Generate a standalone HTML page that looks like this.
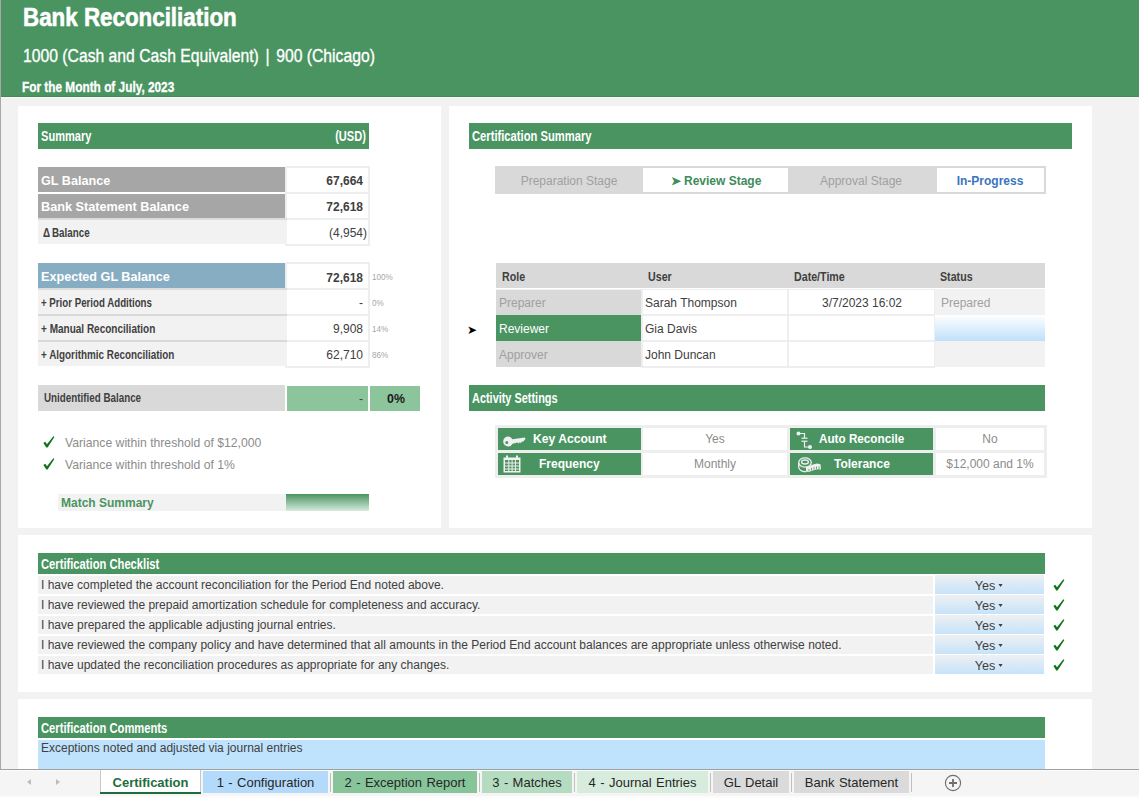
<!DOCTYPE html>
<html><head><meta charset="utf-8"><style>
html,body{margin:0;padding:0}
body{width:1139px;height:798px;overflow:hidden;position:relative;background:#f2f2f2;font-family:"Liberation Sans",sans-serif}
body>div{position:absolute}
.t{white-space:nowrap;line-height:normal}
svg{display:block}
</style></head><body>
<div style="left:0px;top:0px;width:1px;height:770px;background:#a8a8a8;"></div>
<div style="left:1px;top:0px;width:1138px;height:96px;background:#4a9462;"></div>
<div style="left:1px;top:96px;width:1138px;height:1px;background:#438c5a;"></div>
<div style="left:1px;top:97px;width:1138px;height:1px;background:#f9f5f8;"></div>
<div class="t" style="top:2.47px;font-size:26px;font-weight:700;color:#fff;transform:scaleX(0.86);left:23px;transform-origin:0 0;-webkit-text-stroke:0.6px #fff;">Bank Reconciliation</div>
<div class="t" style="top:44.80px;font-size:19px;font-weight:400;color:#fff;transform:scaleX(0.827);left:23px;transform-origin:0 0;-webkit-text-stroke:0.35px #fff;">1000 (Cash and Cash Equivalent)<span style="display:inline-block;width:8px"></span>|<span style="display:inline-block;width:8px"></span>900 (Chicago)</div>
<div class="t" style="top:79.33px;font-size:14px;font-weight:700;color:#fff;transform:scaleX(0.845);left:22px;transform-origin:0 0;-webkit-text-stroke:0.3px #fff;">For the Month of July, 2023</div>
<div style="left:18px;top:106px;width:423px;height:422px;background:#fff;"></div>
<div style="left:449px;top:106px;width:643px;height:422px;background:#fff;"></div>
<div style="left:18px;top:535px;width:1074px;height:157px;background:#fff;"></div>
<div style="left:18px;top:699px;width:1074px;height:71px;background:#fff;"></div>
<div style="left:38px;top:123px;width:331px;height:26px;background:#4a9462;"></div>
<div class="t" style="top:128.33px;font-size:14px;font-weight:700;color:#fff;transform:scaleX(0.79);left:41px;transform-origin:0 0;">Summary</div>
<div class="t" style="top:128.33px;font-size:14px;font-weight:700;color:#fff;transform:scaleX(0.79);right:773px;transform-origin:100% 0;text-align:right;">(USD)</div>
<div style="left:285px;top:166px;width:85px;height:80px;background:#eeeeee;"></div>
<div style="left:38px;top:167px;width:247px;height:25px;background:#a6a6a6;"></div>
<div style="left:38px;top:194px;width:247px;height:24px;background:#a6a6a6;"></div>
<div style="left:38px;top:218px;width:249px;height:2px;background:#dcdcdc;"></div>
<div style="left:38px;top:220px;width:249px;height:24px;background:#f2f2f2;"></div>
<div style="left:287px;top:168px;width:81px;height:24px;background:#fff;"></div>
<div style="left:287px;top:194px;width:81px;height:24px;background:#fff;"></div>
<div style="left:287px;top:220px;width:81px;height:24px;background:#fff;"></div>
<div class="t" style="top:173.24px;font-size:13px;font-weight:700;color:#fff;transform:scaleX(0.97);left:41px;transform-origin:0 0;">GL Balance</div>
<div class="t" style="top:199.24px;font-size:13px;font-weight:700;color:#fff;transform:scaleX(0.975);left:41px;transform-origin:0 0;">Bank Statement Balance</div>
<div class="t" style="top:225.24px;font-size:13px;font-weight:700;color:#404040;transform:scaleX(0.755);left:43px;transform-origin:0 0;">&Delta;&thinsp;Balance</div>
<div class="t" style="top:174.14px;font-size:12px;font-weight:700;color:#404040;right:776px;transform-origin:100% 0;text-align:right;">67,664</div>
<div class="t" style="top:200.14px;font-size:12px;font-weight:700;color:#404040;right:776px;transform-origin:100% 0;text-align:right;">72,618</div>
<div class="t" style="top:226.14px;font-size:12px;font-weight:400;color:#404040;right:772px;transform-origin:100% 0;text-align:right;">(4,954)</div>
<div style="left:285px;top:262px;width:85px;height:106px;background:#eeeeee;"></div>
<div style="left:38px;top:263px;width:247px;height:25px;background:#87adc3;"></div>
<div style="left:38px;top:288px;width:249px;height:2px;background:#dcdcdc;"></div>
<div style="left:38px;top:290px;width:249px;height:24px;background:#f2f2f2;"></div>
<div style="left:38px;top:314px;width:249px;height:2px;background:#d9d9d9;"></div>
<div style="left:38px;top:316px;width:249px;height:24px;background:#f2f2f2;"></div>
<div style="left:38px;top:340px;width:249px;height:2px;background:#d9d9d9;"></div>
<div style="left:38px;top:342px;width:249px;height:24px;background:#f2f2f2;"></div>
<div style="left:287px;top:264px;width:81px;height:24px;background:#fff;"></div>
<div style="left:287px;top:290px;width:81px;height:24px;background:#fff;"></div>
<div style="left:287px;top:316px;width:81px;height:24px;background:#fff;"></div>
<div style="left:287px;top:342px;width:81px;height:24px;background:#fff;"></div>
<div class="t" style="top:269.24px;font-size:13px;font-weight:700;color:#fff;transform:scaleX(0.97);left:41px;transform-origin:0 0;">Expected GL Balance</div>
<div class="t" style="top:295.24px;font-size:13px;font-weight:700;color:#404040;transform:scaleX(0.746);left:41px;transform-origin:0 0;">+ Prior Period Additions</div>
<div class="t" style="top:321.24px;font-size:13px;font-weight:700;color:#404040;transform:scaleX(0.77);left:41px;transform-origin:0 0;">+ Manual Reconciliation</div>
<div class="t" style="top:347.24px;font-size:13px;font-weight:700;color:#404040;transform:scaleX(0.76);left:41px;transform-origin:0 0;">+ Algorithmic Reconciliation</div>
<div class="t" style="top:271.14px;font-size:12px;font-weight:700;color:#404040;right:776px;transform-origin:100% 0;text-align:right;">72,618</div>
<div class="t" style="top:296.14px;font-size:12px;font-weight:400;color:#404040;right:776px;transform-origin:100% 0;text-align:right;">-</div>
<div class="t" style="top:322.14px;font-size:12px;font-weight:400;color:#404040;right:776px;transform-origin:100% 0;text-align:right;">9,908</div>
<div class="t" style="top:348.14px;font-size:12px;font-weight:400;color:#404040;right:776px;transform-origin:100% 0;text-align:right;">62,710</div>
<div class="t" style="top:271.86px;font-size:9px;font-weight:400;color:#a6a6a6;transform:scaleX(0.9);left:372px;transform-origin:0 0;">100%</div>
<div class="t" style="top:297.86px;font-size:9px;font-weight:400;color:#a6a6a6;transform:scaleX(0.9);left:372px;transform-origin:0 0;">0%</div>
<div class="t" style="top:323.86px;font-size:9px;font-weight:400;color:#a6a6a6;transform:scaleX(0.9);left:372px;transform-origin:0 0;">14%</div>
<div class="t" style="top:349.86px;font-size:9px;font-weight:400;color:#a6a6a6;transform:scaleX(0.9);left:372px;transform-origin:0 0;">86%</div>
<div style="left:38px;top:385px;width:247px;height:26px;background:#d9d9d9;"></div>
<div style="left:287px;top:386px;width:81px;height:25px;background:#8cc59b;"></div>
<div style="left:370px;top:386px;width:50px;height:25px;background:#8cc59b;"></div>
<div class="t" style="top:390.24px;font-size:13px;font-weight:700;color:#404040;transform:scaleX(0.755);left:44px;transform-origin:0 0;">Unidentified Balance</div>
<div class="t" style="top:392.14px;font-size:12px;font-weight:400;color:#404040;right:776px;transform-origin:100% 0;text-align:right;">-</div>
<div class="t" style="top:391.24px;font-size:13px;font-weight:700;color:#1a1a1a;transform:scaleX(0.95);left:96px;width:600px;text-align:center;transform-origin:50% 0;">0%</div>
<div style="left:43px;top:436px;width:12px;height:12px"><svg width="12" height="12" viewBox="0 0 12 12"><path d="M0.4 6.9 L2.2 5.7 L4 8.3 L10.4 0.3 L11.4 1 L4.6 11.4 L3.3 11.4 Z" fill="#0e7418"/></svg></div>
<div class="t" style="top:435.96px;font-size:12.2px;font-weight:400;color:#8c8c8c;left:65px;transform-origin:0 0;">Variance within threshold of $12,000</div>
<div style="left:43px;top:458px;width:12px;height:12px"><svg width="12" height="12" viewBox="0 0 12 12"><path d="M0.4 6.9 L2.2 5.7 L4 8.3 L10.4 0.3 L11.4 1 L4.6 11.4 L3.3 11.4 Z" fill="#0e7418"/></svg></div>
<div class="t" style="top:457.96px;font-size:12.2px;font-weight:400;color:#8c8c8c;left:65px;transform-origin:0 0;">Variance within threshold of 1%</div>
<div style="left:58px;top:494px;width:228px;height:17px;background:#f2f2f2;"></div>
<div style="left:286px;top:494px;width:83px;height:17px;background:linear-gradient(#4a9462,#d6ebdc);"></div>
<div class="t" style="top:496.14px;font-size:12px;font-weight:700;color:#4a9462;left:61px;transform-origin:0 0;">Match Summary</div>
<div style="left:469px;top:123px;width:603px;height:26px;background:#4a9462;"></div>
<div class="t" style="top:128.33px;font-size:14px;font-weight:700;color:#fff;transform:scaleX(0.8);left:472px;transform-origin:0 0;">Certification Summary</div>
<div style="left:495px;top:166px;width:551px;height:28px;background:#d9d9d9;"></div>
<div style="left:643px;top:168px;width:145px;height:24px;background:#fff;"></div>
<div style="left:937px;top:168px;width:107px;height:24px;background:#fff;"></div>
<div class="t" style="top:174.14px;font-size:12px;font-weight:400;color:#a0a0a0;left:269px;width:600px;text-align:center;transform-origin:50% 0;">Preparation Stage</div>
<div class="t" style="top:174.14px;font-size:12px;font-weight:700;color:#3d8c5a;left:416px;width:600px;text-align:center;transform-origin:50% 0;">&#10148; Review Stage</div>
<div class="t" style="top:174.14px;font-size:12px;font-weight:400;color:#a0a0a0;left:561px;width:600px;text-align:center;transform-origin:50% 0;">Approval Stage</div>
<div class="t" style="top:174.14px;font-size:12px;font-weight:700;color:#3a74c0;left:690px;width:600px;text-align:center;transform-origin:50% 0;">In-Progress</div>
<div style="left:496px;top:263px;width:549px;height:25px;background:#d9d9d9;"></div>
<div style="left:641px;top:289px;width:294px;height:79px;background:#eeeeee;"></div>
<div style="left:496px;top:289px;width:145px;height:26px;background:#d9d9d9;"></div>
<div style="left:496px;top:315px;width:145px;height:26px;background:#4a9462;"></div>
<div style="left:496px;top:341px;width:145px;height:26px;background:#d9d9d9;"></div>
<div style="left:496px;top:289px;width:145px;height:1px;background:#f2f2f2;"></div>
<div style="left:643px;top:290px;width:144px;height:24px;background:#fff;"></div>
<div style="left:789px;top:290px;width:145px;height:24px;background:#fff;"></div>
<div style="left:643px;top:316px;width:144px;height:24px;background:#fff;"></div>
<div style="left:789px;top:316px;width:145px;height:24px;background:#fff;"></div>
<div style="left:643px;top:342px;width:144px;height:24px;background:#fff;"></div>
<div style="left:789px;top:342px;width:145px;height:24px;background:#fff;"></div>
<div style="left:935px;top:289px;width:110px;height:26px;background:#f2f2f2;"></div>
<div style="left:935px;top:315px;width:110px;height:26px;background:linear-gradient(#ffffff,#bee0fb);"></div>
<div style="left:935px;top:341px;width:110px;height:26px;background:#f2f2f2;"></div>
<div class="t" style="top:269.24px;font-size:13px;font-weight:700;color:#404040;transform:scaleX(0.82);left:502px;transform-origin:0 0;">Role</div>
<div class="t" style="top:269.24px;font-size:13px;font-weight:700;color:#404040;transform:scaleX(0.82);left:648px;transform-origin:0 0;">User</div>
<div class="t" style="top:269.24px;font-size:13px;font-weight:700;color:#404040;transform:scaleX(0.82);left:794px;transform-origin:0 0;">Date/Time</div>
<div class="t" style="top:269.24px;font-size:13px;font-weight:700;color:#404040;transform:scaleX(0.82);left:940px;transform-origin:0 0;">Status</div>
<div class="t" style="top:296.14px;font-size:12px;font-weight:400;color:#a0a0a0;left:499px;transform-origin:0 0;">Preparer</div>
<div class="t" style="top:322.14px;font-size:12px;font-weight:400;color:#fff;left:499px;transform-origin:0 0;">Reviewer</div>
<div class="t" style="top:348.14px;font-size:12px;font-weight:400;color:#a0a0a0;left:499px;transform-origin:0 0;">Approver</div>
<div class="t" style="top:296.14px;font-size:12px;font-weight:400;color:#404040;left:645px;transform-origin:0 0;">Sarah Thompson</div>
<div class="t" style="top:322.14px;font-size:12px;font-weight:400;color:#404040;left:645px;transform-origin:0 0;">Gia Davis</div>
<div class="t" style="top:348.14px;font-size:12px;font-weight:400;color:#404040;left:645px;transform-origin:0 0;">John Duncan</div>
<div class="t" style="top:296.14px;font-size:12px;font-weight:400;color:#404040;left:562px;width:600px;text-align:center;transform-origin:50% 0;">3/7/2023 16:02</div>
<div class="t" style="top:296.14px;font-size:12px;font-weight:400;color:#a0a0a0;left:941px;transform-origin:0 0;">Prepared</div>
<div class="t" style="top:322.64px;font-size:12px;font-weight:400;color:#000;left:467px;transform-origin:0 0;">&#10148;</div>
<div style="left:469px;top:385px;width:576px;height:26px;background:#4a9462;"></div>
<div class="t" style="top:390.33px;font-size:14px;font-weight:700;color:#fff;transform:scaleX(0.78);left:472px;transform-origin:0 0;">Activity Settings</div>
<div style="left:495px;top:425px;width:552px;height:53px;background:#eeeeee;"></div>
<div style="left:498px;top:428px;width:143px;height:22px;background:#4a9462;"></div>
<div style="left:643px;top:428px;width:144px;height:22px;background:#fff;"></div>
<div style="left:790px;top:428px;width:143px;height:22px;background:#4a9462;"></div>
<div style="left:936px;top:428px;width:108px;height:22px;background:#fff;"></div>
<div style="left:498px;top:453px;width:143px;height:22px;background:#4a9462;"></div>
<div style="left:643px;top:453px;width:144px;height:22px;background:#fff;"></div>
<div style="left:790px;top:453px;width:143px;height:22px;background:#4a9462;"></div>
<div style="left:936px;top:453px;width:108px;height:22px;background:#fff;"></div>
<div class="t" style="top:432.14px;font-size:12px;font-weight:700;color:#fff;transform:scaleX(1.01);left:533px;transform-origin:0 0;">Key Account</div>
<div class="t" style="top:456.64px;font-size:12px;font-weight:700;color:#fff;left:539px;transform-origin:0 0;">Frequency</div>
<div class="t" style="top:432.14px;font-size:12px;font-weight:700;color:#fff;transform:scaleX(0.975);left:819px;transform-origin:0 0;">Auto Reconcile</div>
<div class="t" style="top:456.64px;font-size:12px;font-weight:700;color:#fff;left:834px;transform-origin:0 0;">Tolerance</div>
<svg style="position:absolute;left:503px;top:435px" width="23" height="13" viewBox="0 0 23 13"><path fill-rule="evenodd" fill="#f0f0f0" d="M5.2 1.5 A5 5 0 1 0 5.2 11.5 A5 5 0 0 0 9.6 8.8 L14.6 7.6 L15.6 8.6 L16.8 7.3 L17.9 8.1 L19.2 6.6 L20.4 6.6 L22.6 3.8 L21.6 2.6 L9.4 4.3 A5 5 0 0 0 5.2 1.5 Z M3.8 6 A1.5 1.5 0 1 0 3.8 9 A1.5 1.5 0 1 0 3.8 6 Z"/></svg>
<svg style="position:absolute;left:503px;top:455px" width="18" height="18" viewBox="0 0 18 18"><path fill="#f0f0f0" fill-rule="evenodd" d="M0.5 2.5 H17.5 V17.5 H0.5 Z M2 5 V16 H16 V5 Z"/><rect x="3" y="0.5" width="2" height="3.5" fill="#f0f0f0"/><rect x="13" y="0.5" width="2" height="3.5" fill="#f0f0f0"/><g fill="#f0f0f0"><rect x="2" y="7.5" width="14" height="1"/><rect x="2" y="10.5" width="14" height="1"/><rect x="2" y="13.5" width="14" height="1"/><rect x="5.3" y="5" width="1" height="11"/><rect x="8.6" y="5" width="1" height="11"/><rect x="11.9" y="5" width="1" height="11"/></g></svg>
<svg style="position:absolute;left:796px;top:431px" width="17" height="19" viewBox="0 0 17 19"><g fill="#f0f0f0"><circle cx="2.5" cy="2.5" r="2"/><circle cx="14" cy="16" r="2"/></g><g stroke="#f0f0f0" stroke-width="1.2" fill="none"><path d="M2.5 2.5 H8.5 V7"/><path d="M5.5 7.2 H11.5"/><path d="M5.5 10.2 H11.5"/><path d="M8.5 10.2 V16 H14"/></g></svg>
<svg style="position:absolute;left:798px;top:457px" width="24" height="16" viewBox="0 0 24 16"><g fill="none" stroke="#f0f0f0" stroke-width="1.3"><ellipse cx="7" cy="5.5" rx="6.3" ry="4.6"/><ellipse cx="7" cy="5" rx="3.4" ry="2"/><path d="M0.7 5.5 V10 A6.3 4.6 0 0 0 8 14.6"/></g><path fill="#f0f0f0" d="M8 9.8 L12 9 L15 7.5 L19 6.5 L22.5 7.2 L23 12.5 L19.5 12.2 L15.5 13.3 L11.5 14.8 L8 14.8 Z"/><g stroke="#4a9462" stroke-width="0.8"><path d="M11 12 V14"/><path d="M13.5 11 V13.5"/><path d="M16 10 V12.5"/><path d="M18.5 9.5 V12"/><path d="M21 9.5 V12"/></g></svg>
<div class="t" style="top:432.14px;font-size:12px;font-weight:400;color:#8c8c8c;left:415px;width:600px;text-align:center;transform-origin:50% 0;">Yes</div>
<div class="t" style="top:457.14px;font-size:12px;font-weight:400;color:#8c8c8c;left:415px;width:600px;text-align:center;transform-origin:50% 0;">Monthly</div>
<div class="t" style="top:432.14px;font-size:12px;font-weight:400;color:#8c8c8c;left:690px;width:600px;text-align:center;transform-origin:50% 0;">No</div>
<div class="t" style="top:457.14px;font-size:12px;font-weight:400;color:#8c8c8c;left:690px;width:600px;text-align:center;transform-origin:50% 0;">$12,000 and 1%</div>
<div style="left:38px;top:553px;width:1007px;height:21px;background:#4a9462;"></div>
<div class="t" style="top:556.33px;font-size:14px;font-weight:700;color:#fff;transform:scaleX(0.8);left:41px;transform-origin:0 0;">Certification Checklist</div>
<div style="left:38px;top:576px;width:895px;height:18px;background:#f2f2f2;"></div>
<div style="left:935px;top:575px;width:109px;height:19px;background:linear-gradient(#eef0f2,#c6e3fa);"></div>
<div class="t" style="top:578.14px;font-size:12px;font-weight:400;color:#404040;left:41px;transform-origin:0 0;">I have completed the account reconciliation for the Period End noted above.</div>
<div class="t" style="top:579.14px;font-size:12px;font-weight:400;color:#404040;transform:scaleX(1.05);left:689px;width:600px;text-align:center;transform-origin:50% 0;">Yes&nbsp;<span style="display:inline-block;width:0;height:0;border-left:2.5px solid transparent;border-right:2.5px solid transparent;border-top:3px solid #404040;vertical-align:3px"></span></div>
<div style="left:1053px;top:579px;width:12px;height:12px"><svg width="12" height="12" viewBox="0 0 12 12"><path d="M0.4 6.9 L2.2 5.7 L4 8.3 L10.4 0.3 L11.4 1 L4.6 11.4 L3.3 11.4 Z" fill="#0e7418"/></svg></div>
<div style="left:38px;top:596px;width:895px;height:18px;background:#f2f2f2;"></div>
<div style="left:935px;top:595px;width:109px;height:19px;background:linear-gradient(#eef0f2,#c6e3fa);"></div>
<div class="t" style="top:598.14px;font-size:12px;font-weight:400;color:#404040;left:41px;transform-origin:0 0;">I have reviewed the prepaid amortization schedule for completeness and accuracy.</div>
<div class="t" style="top:599.14px;font-size:12px;font-weight:400;color:#404040;transform:scaleX(1.05);left:689px;width:600px;text-align:center;transform-origin:50% 0;">Yes&nbsp;<span style="display:inline-block;width:0;height:0;border-left:2.5px solid transparent;border-right:2.5px solid transparent;border-top:3px solid #404040;vertical-align:3px"></span></div>
<div style="left:1053px;top:599px;width:12px;height:12px"><svg width="12" height="12" viewBox="0 0 12 12"><path d="M0.4 6.9 L2.2 5.7 L4 8.3 L10.4 0.3 L11.4 1 L4.6 11.4 L3.3 11.4 Z" fill="#0e7418"/></svg></div>
<div style="left:38px;top:616px;width:895px;height:18px;background:#f2f2f2;"></div>
<div style="left:935px;top:615px;width:109px;height:19px;background:linear-gradient(#eef0f2,#c6e3fa);"></div>
<div class="t" style="top:618.14px;font-size:12px;font-weight:400;color:#404040;left:41px;transform-origin:0 0;">I have prepared the applicable adjusting journal entries.</div>
<div class="t" style="top:619.14px;font-size:12px;font-weight:400;color:#404040;transform:scaleX(1.05);left:689px;width:600px;text-align:center;transform-origin:50% 0;">Yes&nbsp;<span style="display:inline-block;width:0;height:0;border-left:2.5px solid transparent;border-right:2.5px solid transparent;border-top:3px solid #404040;vertical-align:3px"></span></div>
<div style="left:1053px;top:619px;width:12px;height:12px"><svg width="12" height="12" viewBox="0 0 12 12"><path d="M0.4 6.9 L2.2 5.7 L4 8.3 L10.4 0.3 L11.4 1 L4.6 11.4 L3.3 11.4 Z" fill="#0e7418"/></svg></div>
<div style="left:38px;top:636px;width:895px;height:18px;background:#f2f2f2;"></div>
<div style="left:935px;top:635px;width:109px;height:19px;background:linear-gradient(#eef0f2,#c6e3fa);"></div>
<div class="t" style="top:638.14px;font-size:12px;font-weight:400;color:#404040;left:41px;transform-origin:0 0;">I have reviewed the company policy and have determined that all amounts in the Period End account balances are appropriate unless otherwise noted.</div>
<div class="t" style="top:639.14px;font-size:12px;font-weight:400;color:#404040;transform:scaleX(1.05);left:689px;width:600px;text-align:center;transform-origin:50% 0;">Yes&nbsp;<span style="display:inline-block;width:0;height:0;border-left:2.5px solid transparent;border-right:2.5px solid transparent;border-top:3px solid #404040;vertical-align:3px"></span></div>
<div style="left:1053px;top:639px;width:12px;height:12px"><svg width="12" height="12" viewBox="0 0 12 12"><path d="M0.4 6.9 L2.2 5.7 L4 8.3 L10.4 0.3 L11.4 1 L4.6 11.4 L3.3 11.4 Z" fill="#0e7418"/></svg></div>
<div style="left:38px;top:656px;width:895px;height:18px;background:#f2f2f2;"></div>
<div style="left:935px;top:655px;width:109px;height:19px;background:linear-gradient(#eef0f2,#c6e3fa);"></div>
<div class="t" style="top:658.14px;font-size:12px;font-weight:400;color:#404040;left:41px;transform-origin:0 0;">I have updated the reconciliation procedures as appropriate for any changes.</div>
<div class="t" style="top:659.14px;font-size:12px;font-weight:400;color:#404040;transform:scaleX(1.05);left:689px;width:600px;text-align:center;transform-origin:50% 0;">Yes&nbsp;<span style="display:inline-block;width:0;height:0;border-left:2.5px solid transparent;border-right:2.5px solid transparent;border-top:3px solid #404040;vertical-align:3px"></span></div>
<div style="left:1053px;top:659px;width:12px;height:12px"><svg width="12" height="12" viewBox="0 0 12 12"><path d="M0.4 6.9 L2.2 5.7 L4 8.3 L10.4 0.3 L11.4 1 L4.6 11.4 L3.3 11.4 Z" fill="#0e7418"/></svg></div>
<div style="left:38px;top:717px;width:1007px;height:21px;background:#4a9462;"></div>
<div class="t" style="top:720.33px;font-size:14px;font-weight:700;color:#fff;transform:scaleX(0.8);left:41px;transform-origin:0 0;">Certification Comments</div>
<div style="left:38px;top:740px;width:1007px;height:30px;background:#bfe3fc;"></div>
<div class="t" style="top:741.14px;font-size:12px;font-weight:400;color:#404040;left:41px;transform-origin:0 0;">Exceptions noted and adjusted via journal entries</div>
<div style="left:0px;top:769px;width:1139px;height:1px;background:#a0a0a0;"></div>
<div style="left:0px;top:770px;width:1139px;height:28px;background:#f5f5f5;"></div>
<div style="left:0px;top:770px;width:1139px;height:1px;background:#fbfbfb;"></div>
<div style="left:0px;top:796px;width:1139px;height:2px;background:#fcfcfc;"></div>
<div style="left:27px;top:779px;width:0;height:0;border-right:4px solid #bdbdbd;border-top:3.5px solid transparent;border-bottom:3.5px solid transparent"></div>
<div style="left:56px;top:779px;width:0;height:0;border-left:4px solid #bdbdbd;border-top:3.5px solid transparent;border-bottom:3.5px solid transparent"></div>
<div style="left:100px;top:770px;width:101px;height:24px;background:#fff;border-left:1px solid #c8c8c8;border-right:1px solid #c8c8c8;box-sizing:border-box"></div>
<div style="left:100px;top:792px;width:101px;height:2px;background:#1e6e3c;"></div>
<div class="t" style="top:775.24px;font-size:13px;font-weight:700;color:#1e6e3c;left:-149.5px;width:600px;text-align:center;transform-origin:50% 0;">Certification</div>
<div style="left:203px;top:771px;width:125px;height:22px;background:#b3dafb;"></div>
<div class="t" style="top:775.24px;font-size:13px;font-weight:400;color:#262626;left:-34.5px;width:600px;text-align:center;transform-origin:50% 0;word-spacing:0.8px;">1 - Configuration</div>
<div style="left:333px;top:771px;width:144px;height:22px;background:#88c49a;"></div>
<div class="t" style="top:775.24px;font-size:13px;font-weight:400;color:#262626;left:105.0px;width:600px;text-align:center;transform-origin:50% 0;word-spacing:0.8px;">2 - Exception Report</div>
<div style="left:482px;top:771px;width:90px;height:22px;background:#b5dcc0;"></div>
<div class="t" style="top:775.24px;font-size:13px;font-weight:400;color:#262626;left:227.0px;width:600px;text-align:center;transform-origin:50% 0;word-spacing:0.8px;">3 - Matches</div>
<div style="left:577px;top:771px;width:131px;height:22px;background:#d8ecdd;"></div>
<div class="t" style="top:775.24px;font-size:13px;font-weight:400;color:#262626;left:342.5px;width:600px;text-align:center;transform-origin:50% 0;word-spacing:0.8px;">4 - Journal Entries</div>
<div style="left:713px;top:771px;width:76px;height:22px;background:#dadada;"></div>
<div class="t" style="top:775.24px;font-size:13px;font-weight:400;color:#262626;left:451.0px;width:600px;text-align:center;transform-origin:50% 0;word-spacing:0.8px;">GL Detail</div>
<div style="left:794px;top:771px;width:115px;height:22px;background:#dadada;"></div>
<div class="t" style="top:775.24px;font-size:13px;font-weight:400;color:#262626;left:551.5px;width:600px;text-align:center;transform-origin:50% 0;word-spacing:0.8px;">Bank Statement</div>
<div style="left:330px;top:773px;width:1px;height:19px;background:#c0c0c0;"></div>
<div style="left:479px;top:773px;width:1px;height:19px;background:#c0c0c0;"></div>
<div style="left:574px;top:773px;width:1px;height:19px;background:#c0c0c0;"></div>
<div style="left:710px;top:773px;width:1px;height:19px;background:#c0c0c0;"></div>
<div style="left:791px;top:773px;width:1px;height:19px;background:#c0c0c0;"></div>
<div style="left:911px;top:773px;width:1px;height:19px;background:#c0c0c0;"></div>
<svg style="position:absolute;left:944px;top:774px" width="18" height="18" viewBox="0 0 18 18"><circle cx="9" cy="9" r="7.6" fill="none" stroke="#6e6e6e" stroke-width="1.1"/><path d="M5 9 H13 M9 5 V13" stroke="#6e6e6e" stroke-width="1.8"/></svg>
</body></html>
